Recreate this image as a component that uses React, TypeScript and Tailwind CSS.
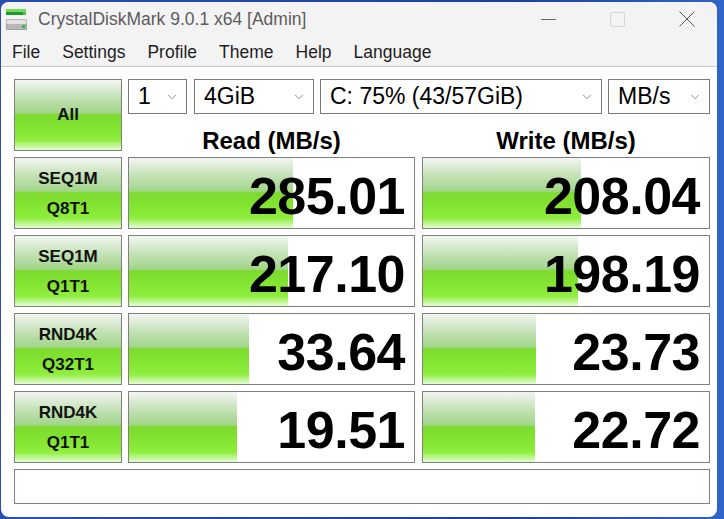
import { ChevronDown } from "lucide-react";

const FONT = "font-['Liberation_Sans',Arial,sans-serif]";

const BAR =
  "bg-[linear-gradient(to_bottom,#f3f6f2_0%,#c4e2b6_25%,#a2d58a_47%,#7cdb2d_50%,#84e532_70%,#8fee3e_86%,#e4fcd6_100%)]";

const rows = [
  { l1: "SEQ1M", l2: "Q8T1", read: "285.01", rw: 164, write: "208.04", ww: 158 },
  { l1: "SEQ1M", l2: "Q1T1", read: "217.10", rw: 159, write: "198.19", ww: 155 },
  { l1: "RND4K", l2: "Q32T1", read: "33.64", rw: 120, write: "23.73", ww: 113 },
  { l1: "RND4K", l2: "Q1T1", read: "19.51", rw: 108, write: "22.72", ww: 112 },
];

function AppIcon() {
  return (
    <svg width="24" height="24" viewBox="0 0 24 24">
      <rect x="1" y="1" width="20" height="3" fill="#6fdc5a" />
      <rect x="1" y="4" width="17" height="3" fill="#1c9a2c" />
      <rect x="18" y="4" width="3" height="3" fill="#4cc24a" />
      <rect x="1" y="11" width="21" height="11" rx="1.5" fill="#8c8c8c" />
      <rect x="1.5" y="11.5" width="20" height="5" rx="1" fill="#e2e2e2" />
      <rect x="1.5" y="16.5" width="20" height="5" rx="1" fill="#b8b8b8" />
      <rect x="17" y="17" width="3" height="3" fill="#2fbf3a" />
    </svg>
  );
}

function Select({ w, text }: { w: string; text: string }) {
  return (
    <div
      className={`${w} h-[35px] border border-[#7a7a7a] bg-white flex items-center pl-[9px] pr-[7px]`}
    >
      <span className="text-[23px] leading-none text-black flex-1">{text}</span>
      <ChevronDown className="size-[14px] text-[#6a6a6a]" strokeWidth={1.3} />
    </div>
  );
}

function Cell({ value, bar, w }: { value: string; bar: number; w: string }) {
  return (
    <div className={`${w} h-[72px] border border-[#808080] bg-white relative`}>
      <div className={`absolute left-0 top-0 bottom-0 ${BAR}`} style={{ width: bar }} />
      <div className="relative h-full flex items-center justify-end pr-[9px] pt-[5px]">
        <span className="text-[52px] font-bold leading-none text-black tracking-[-0.5px]">
          {value}
        </span>
      </div>
    </div>
  );
}

export default function App() {
  return (
    <div
      className={`${FONT} w-[724px] h-[519px] pt-[2px] pl-[1px] bg-[linear-gradient(90deg,#2a4db4_0%,#2347a8_40%,#1f3f9a_70%,#3064c8_100%)]`}
    >
      <div className="w-[716px] h-[515px] rounded-[8px] overflow-hidden bg-white flex flex-col">
        {/* Title bar */}
        <div className="h-[34px] bg-[#f3f3f3] flex items-center">
          <div className="ml-[4px] mt-[2px]">
            <AppIcon />
          </div>
          <span className="ml-[9px] text-[17.5px] text-[#5c5c5c]">
            CrystalDiskMark 9.0.1 x64 [Admin]
          </span>
          <div className="ml-auto flex items-center gap-[54px] pr-[22px]">
            <div className="w-[15px] h-px bg-[#6a6a6a]" />
            <div className="w-[15px] h-[15px] rounded-[2px] border border-[#d6d6d6]" />
            <svg width="16" height="16" viewBox="0 0 16 16">
              <path d="M0.5 0.5 L15.5 15.5 M15.5 0.5 L0.5 15.5" stroke="#555" strokeWidth="1" />
            </svg>
          </div>
        </div>

        {/* Menu bar */}
        <div className="h-[31px] bg-[#f3f3f3] border-b border-[#c9c9c9] flex items-center gap-[22px] pl-[11px] pt-[3px]">
          {["File", "Settings", "Profile", "Theme", "Help", "Language"].map((m) => (
            <span key={m} className="text-[17.5px] text-[#1e1e1e]">
              {m}
            </span>
          ))}
        </div>

        {/* Main */}
        <div className="flex-1 pl-[13px] pt-[12px]">
          <div className="flex">
            <div
              className={`w-[108px] h-[72px] mr-[6px] border border-[#808080] ${BAR} flex items-center justify-center`}
            >
              <span className="text-[17px] font-bold text-[#111]">All</span>
            </div>
            <div className="flex flex-col">
              <div className="flex">
                <Select w="w-[59px] mr-[7px]" text="1" />
                <Select w="w-[120px] mr-[6px]" text="4GiB" />
                <Select w="w-[282px] mr-[6px]" text="C: 75% (43/57GiB)" />
                <Select w="w-[102px]" text="MB/s" />
              </div>
              <div className="flex h-[37px] pt-[15px]">
                <div className="w-[287px] mr-[7px] text-center text-[24px] font-bold text-black leading-[24px]">
                  Read (MB/s)
                </div>
                <div className="w-[288px] text-center text-[24px] font-bold text-black leading-[24px]">
                  Write (MB/s)
                </div>
              </div>
            </div>
          </div>

          {rows.map((r, i) => (
            <div key={i} className="flex mt-[6px]">
              <div
                className={`w-[108px] h-[72px] mr-[6px] border border-[#808080] ${BAR} flex flex-col items-center justify-center pt-[2px]`}
              >
                <span className="text-[17px] font-bold text-[#111] leading-[30px]">{r.l1}</span>
                <span className="text-[17px] font-bold text-[#111] leading-[30px]">{r.l2}</span>
              </div>
              <Cell value={r.read} bar={r.rw} w="w-[287px] mr-[7px]" />
              <Cell value={r.write} bar={r.ww} w="w-[288px]" />
            </div>
          ))}

          <div className="mt-[6px] w-[696px] h-[35px] border border-[#808080] bg-white" />
        </div>
      </div>
    </div>
  );
}
